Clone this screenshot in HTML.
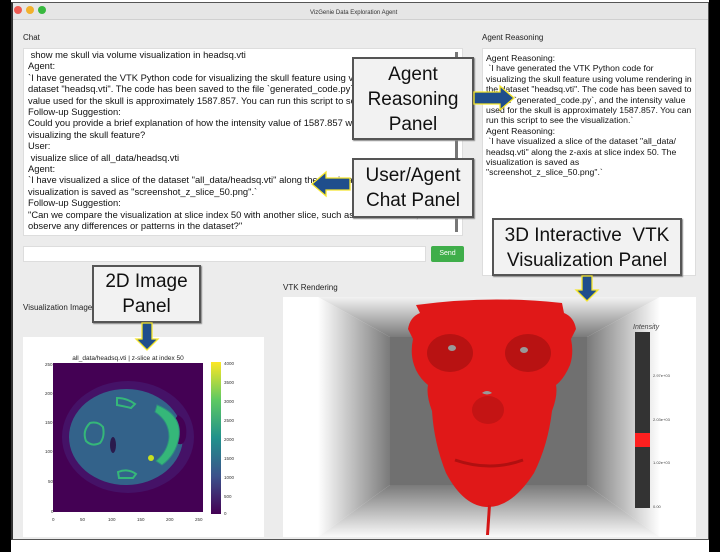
<!DOCTYPE html>
<html><head><meta charset="utf-8"><style>
*{margin:0;padding:0;box-sizing:border-box}
body{width:720px;height:552px;background:#fff;position:relative;overflow:hidden;font-family:"Liberation Sans",sans-serif}
.a{position:absolute}
.win{left:11px;top:2px;width:698px;height:538px;background:#ececec;border:1px solid #555;border-left:2px solid #333}
.lbl{font-size:8px;color:#222}
.txt{font-size:9.4px;line-height:11.4px;color:#111;white-space:pre;overflow:hidden}
.call{background:#f2f2f2;border:2px solid #555;text-align:center;color:#111;font-size:19px;line-height:25px;box-shadow:1px 1px 1px #888}
</style></head><body>
<div class="a" style="left:0;top:0;width:11px;height:552px;background:#000"></div>
<div class="a" style="left:709px;top:0;width:11px;height:552px;background:#000"></div>
<div class="a win"></div>
<div class="a" style="left:13px;top:3px;width:695px;height:17px;background:#e6e6e6;border-bottom:1px solid #d0d0d0"></div>
<div class="a" style="left:14px;top:6px;width:8px;height:8px;border-radius:50%;background:#ee5a52"></div>
<div class="a" style="left:26px;top:6px;width:8px;height:8px;border-radius:50%;background:#f2b12c"></div>
<div class="a" style="left:38px;top:6px;width:8px;height:8px;border-radius:50%;background:#39b93f"></div>
<div class="a lbl" style="left:310px;top:10px;font-size:6px;color:#333">VizGenie Data Exploration Agent</div>

<div class="a lbl" style="left:23px;top:33px">Chat</div>
<div class="a" style="left:23px;top:48px;width:440px;height:188px;background:#fff;border:1px solid #ddd"></div>
<div class="a txt" style="left:28px;top:49px;width:428px"> show me skull via volume visualization in headsq.vti
Agent:
`I have generated the VTK Python code for visualizing the skull feature using volume rendering in the
dataset "headsq.vti". The code has been saved to the file `generated_code.py`, and the intensity
value used for the skull is approximately 1587.857. You can run this script to see the visualization.
Follow-up Suggestion:
Could you provide a brief explanation of how the intensity value of 1587.857 was determined for
visualizing the skull feature?
User:
 visualize slice of all_data/headsq.vti
Agent:
`I have visualized a slice of the dataset "all_data/headsq.vti" along the z-axis at slice index 50. The
visualization is saved as "screenshot_z_slice_50.png".`
Follow-up Suggestion:
"Can we compare the visualization at slice index 50 with another slice, such as index 30 or 70, to
observe any differences or patterns in the dataset?"</div>
<div class="a" style="left:455px;top:52px;width:3px;height:180px;background:#777"></div>

<div class="a lbl" style="left:482px;top:33px">Agent Reasoning</div>
<div class="a" style="left:482px;top:48px;width:214px;height:228px;background:#fff;border:1px solid #ddd"></div>
<div class="a txt" style="left:486px;top:53px;font-size:8.7px;line-height:10.4px;width:208px">Agent Reasoning:
 `I have generated the VTK Python code for
visualizing the skull feature using volume rendering in
the dataset "headsq.vti". The code has been saved to
the file `generated_code.py`, and the intensity value
used for the skull is approximately 1587.857. You can
run this script to see the visualization.`
Agent Reasoning:
 `I have visualized a slice of the dataset "all_data/
headsq.vti" along the z-axis at slice index 50. The
visualization is saved as
"screenshot_z_slice_50.png".`</div>

<div class="a" style="left:23px;top:246px;width:403px;height:16px;background:#fff;border:1px solid #ddd"></div>
<div class="a" style="left:431px;top:246px;width:33px;height:16px;background:#3fae4a;border-radius:2px;color:#fff;font-size:7px;line-height:16px;text-align:center">Send</div>

<div class="a lbl" style="left:23px;top:303px">Visualization Image</div>
<div class="a lbl" style="left:283px;top:283px">VTK Rendering</div>

<svg class="a" style="left:23px;top:337px" width="241" height="200" viewBox="23 337 241 200">
<rect x="23" y="337" width="241" height="200" fill="#fff"/>
<text x="128" y="360" font-size="6.5" text-anchor="middle" fill="#222" font-family="Liberation Sans">all_data/headsq.vti | z-slice at index 50</text>
<rect x="53" y="363" width="150" height="149" fill="#440154"/>
<ellipse cx="128" cy="437" rx="66" ry="56" fill="#46237a" opacity=".5"/>
<ellipse cx="126" cy="437" rx="57" ry="48" fill="#33628a"/>
<path d="M178 415 q10 5 8 22 q-3 12 -12 4 q-10 -8 4 -26z" fill="#440154"/>
<ellipse cx="113" cy="445" rx="3" ry="8" fill="#2a1b4d"/>
<path d="M157 405 q25 10 22 32 q-3 18 -17 28 l-6 -4 q12 -10 13 -24 q0 -16 -14 -25z" fill="#35b779" stroke="#2e8f7f" stroke-width="1"/>
<circle cx="151" cy="458" r="3" fill="#c7e020"/>
<path d="M90 423 q8 -2 13 4 q2 10 -3 16 q-8 4 -14 -2 q-4 -10 4 -18z" fill="none" stroke="#35b779" stroke-width="2"/>
<path d="M117 398 q10 0 18 6 l-4 4 q-8 -2 -14 -3z" fill="none" stroke="#35b779" stroke-width="2"/>
<path d="M118 472 q10 -4 18 2 l-3 4 q-8 0 -14 0z" fill="none" stroke="#35b779" stroke-width="2"/>
<g font-size="4.5" fill="#333" font-family="Liberation Sans">
<text x="45" y="366">250</text><text x="45" y="395">200</text><text x="45" y="424">150</text><text x="45" y="453">100</text><text x="48" y="483">50</text><text x="51" y="513">0</text>
<text x="52" y="521">0</text><text x="80" y="521">50</text><text x="108" y="521">100</text><text x="137" y="521">150</text><text x="166" y="521">200</text><text x="195" y="521">250</text>
<text x="224" y="365">4000</text><text x="224" y="384">3500</text><text x="224" y="403">3000</text><text x="224" y="422">2500</text><text x="224" y="441">2000</text><text x="224" y="460">1500</text><text x="224" y="479">1000</text><text x="224" y="498">500</text><text x="224" y="515">0</text>
</g>
<defs><linearGradient id="vir" x1="0" y1="1" x2="0" y2="0"><stop offset="0" stop-color="#440154"/><stop offset=".25" stop-color="#3b528b"/><stop offset=".5" stop-color="#21918c"/><stop offset=".75" stop-color="#5ec962"/><stop offset="1" stop-color="#fde725"/></linearGradient></defs>
<rect x="211" y="362" width="10" height="152" fill="url(#vir)"/>
</svg>

<svg class="a" style="left:283px;top:297px" width="413" height="240" viewBox="283 297 413 240">
<defs>
<linearGradient id="gl" x1="0" x2="1"><stop offset="0" stop-color="#fff"/><stop offset="1" stop-color="#7a7a7a"/></linearGradient>
<linearGradient id="gr" x1="1" x2="0"><stop offset="0" stop-color="#fff"/><stop offset="1" stop-color="#7a7a7a"/></linearGradient>
<linearGradient id="gt" x1="0" y1="0" x2="0" y2="1"><stop offset="0" stop-color="#f2f2f2"/><stop offset="1" stop-color="#7a7a7a"/></linearGradient>
<linearGradient id="gb" x1="0" y1="1" x2="0" y2="0"><stop offset="0" stop-color="#fafafa"/><stop offset="1" stop-color="#7a7a7a"/></linearGradient>
</defs>
<rect x="283" y="297" width="413" height="240" fill="#fff"/>
<polygon points="318,297 660,297 587,337 390,337" fill="url(#gt)"/>
<polygon points="318,537 660,537 587,485 390,485" fill="url(#gb)"/>
<polygon points="318,297 390,337 390,485 318,537" fill="url(#gl)"/>
<polygon points="660,297 587,337 587,485 660,537" fill="url(#gr)"/>
<rect x="390" y="337" width="197" height="148" fill="#707070"/>
<rect x="283" y="297" width="35" height="240" fill="#fff"/>
<path d="M416 305 q72 -10 146 -2 l2 10 q10 4 12 16 l-5 10 q3 14 -1 26 q-6 14 -14 20 q2 10 -4 26 q-4 34 -18 62 q-22 34 -46 34 q-24 0 -42 -34 q-12 -30 -14 -62 q-6 -16 -4 -26 q-10 -8 -14 -20 q-4 -12 -1 -26 l-5 -10 q2 -12 12 -16z" fill="#e01818"/>
<path d="M488 505 l-2 30 l3 0 l2 -30z" fill="#d41515"/>
<ellipse cx="450" cy="353" rx="23" ry="19" fill="#b81212"/>
<ellipse cx="528" cy="353" rx="23" ry="19" fill="#b81212"/>
<ellipse cx="452" cy="348" rx="4" ry="3" fill="#999"/>
<ellipse cx="524" cy="350" rx="4" ry="3" fill="#999"/>
<path d="M482 393 q5 -4 10 0 q-5 3 -10 0z" fill="#999"/>
<ellipse cx="488" cy="410" rx="16" ry="14" fill="#c41414"/>
<path d="M455 460 q35 12 68 0" stroke="#b01010" stroke-width="3" fill="none"/>
<rect x="635" y="332" width="15" height="176" fill="#333"/>
<rect x="635" y="433" width="15" height="14" fill="#ff2020"/>
<g font-size="4" fill="#444" font-family="Liberation Sans">
<text x="633" y="329" font-size="7" font-style="italic">Intensity</text>
<text x="653" y="377">2.97e+03</text><text x="653" y="421">2.03e+03</text><text x="653" y="464">1.02e+03</text><text x="653" y="508">0.00</text>
</g>
</svg>

<div class="a call" style="left:352px;top:57px;width:122px;height:83px;padding-top:3px">Agent<br>Reasoning<br>Panel</div>
<div class="a call" style="left:352px;top:158px;width:122px;height:60px;padding-top:3px">User/Agent<br>Chat Panel</div>
<div class="a call" style="left:492px;top:218px;width:190px;height:58px;padding-top:3px">3D Interactive&nbsp; VTK<br>Visualization Panel</div>
<div class="a call" style="left:92px;top:265px;width:109px;height:58px;padding-top:2px">2D Image<br>Panel</div>

<svg class="a" style="left:0;top:0" width="720" height="552">
<g fill="#1f4e8c" stroke="#f5e52a" stroke-width="1.3">
<polygon points="474,92 500,92 500,86 514,98 500,110 500,104 474,104"/>
<polygon points="350,178 326,178 326,172 312,184 326,196 326,190 350,190"/>
<polygon points="582,276 592,276 592,290 598,290 587,301 576,290 582,290"/>
<polygon points="142,323 152,323 152,339 158,339 147,350 136,339 142,339"/>
</g>
</svg>
</body></html>
